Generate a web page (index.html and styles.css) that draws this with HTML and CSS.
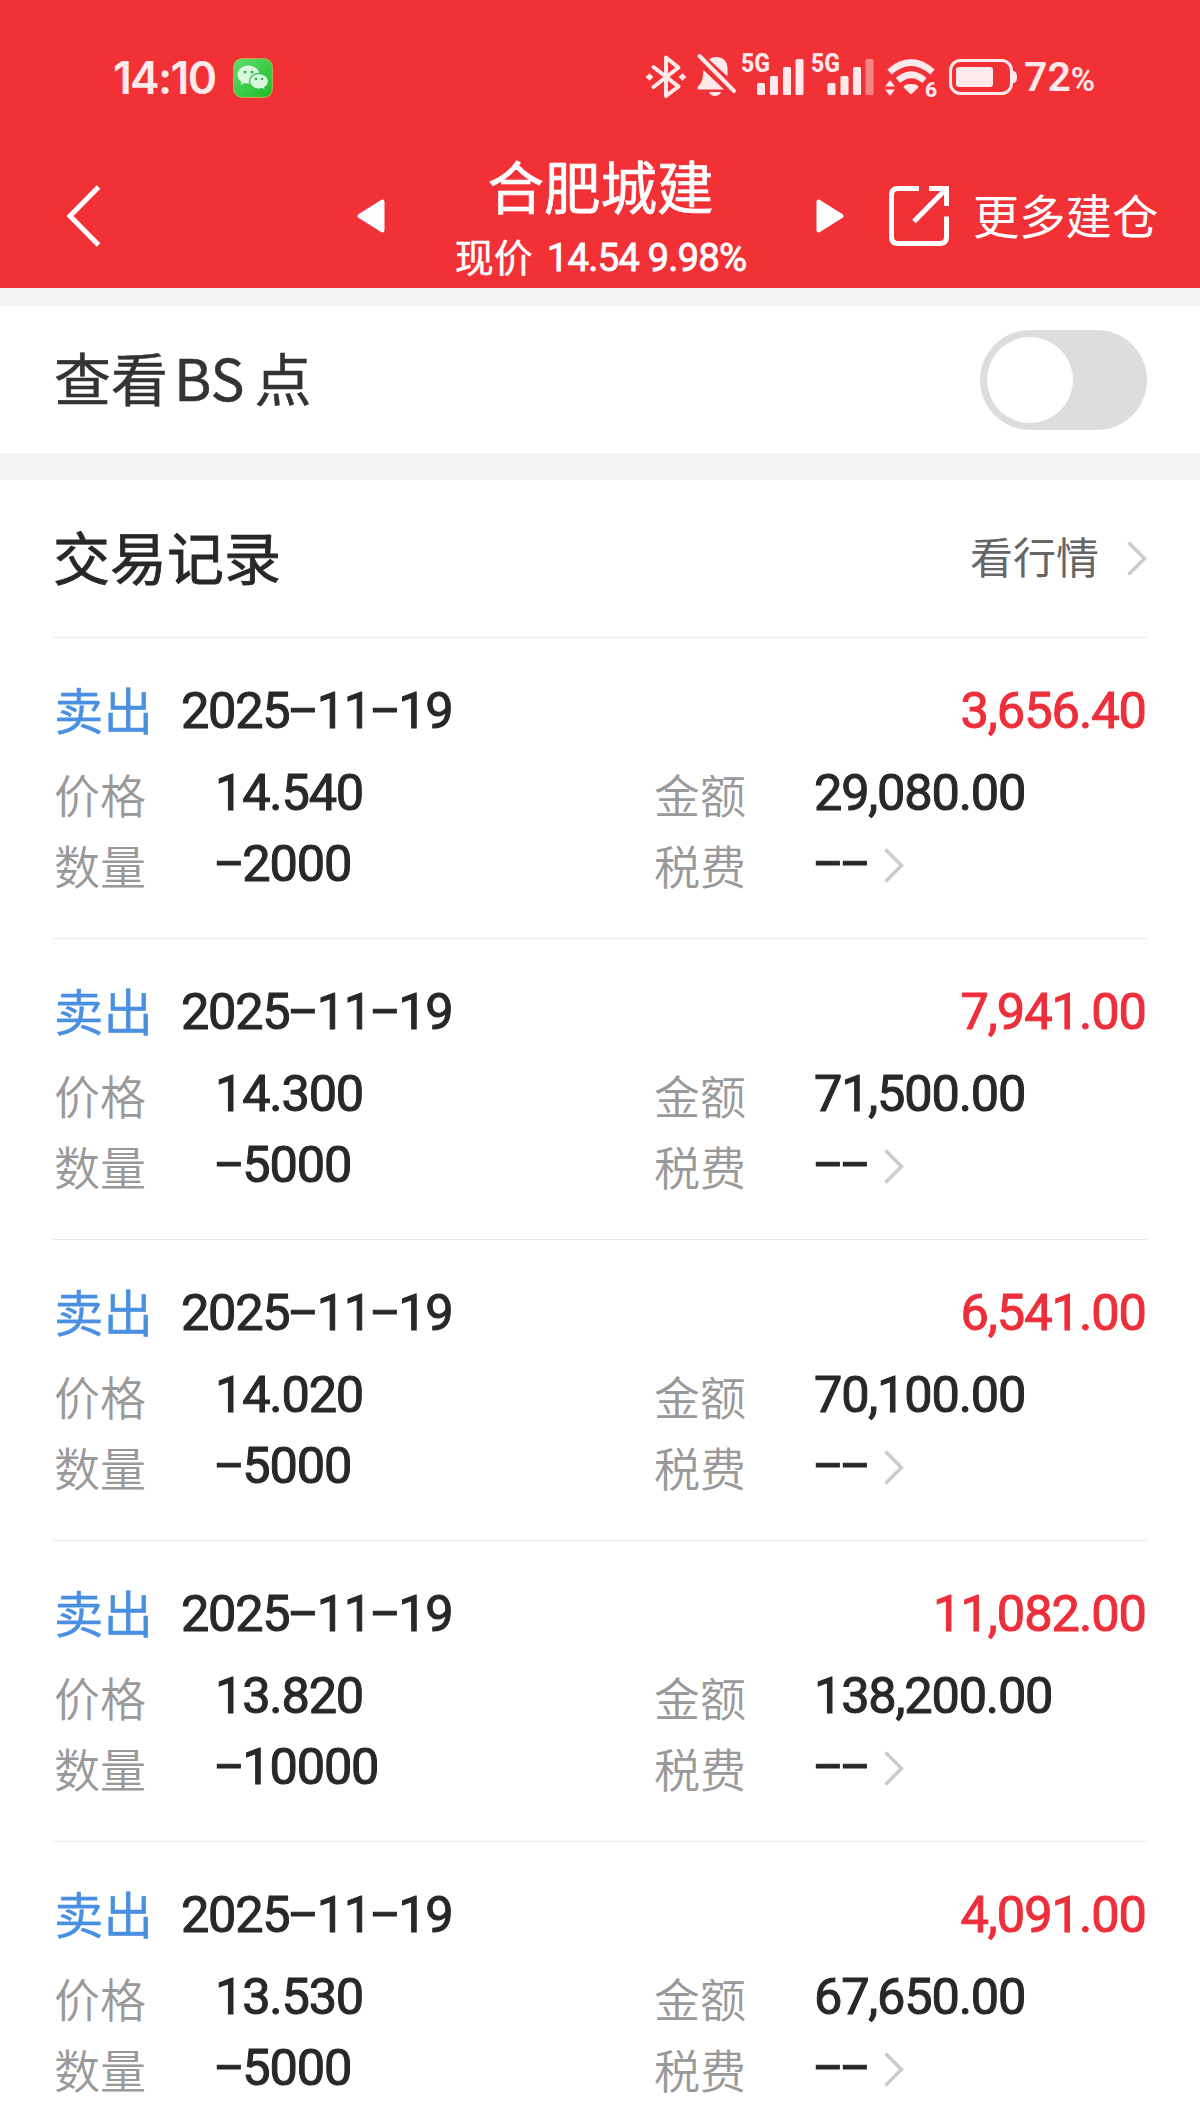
FILE: index.html
```html
<!DOCTYPE html>
<html lang="zh-CN">
<head>
<meta charset="utf-8">
<title>合肥城建 交易记录</title>
<link rel="stylesheet" href="styles.css">
</head>
<body>
<svg width="0" height="0" class="defs">
  <symbol id="chev" viewBox="0 0 20 35"><path d="M1.5 1.5 17.5 17.5 1.5 33.5" fill="none" stroke="#ccc" stroke-width="3.6"/></symbol>
</svg>
<header class="top">
  <div class="status">
    <span class="time">14:10</span>
    <svg class="wechat" width="40" height="40" viewBox="0 0 40 40">
      <defs><linearGradient id="wg" x1="0" y1="0" x2="1" y2="1"><stop offset="0" stop-color="#5fdc72"/><stop offset="1" stop-color="#1dbd22"/></linearGradient></defs>
      <rect x=".7" y=".7" width="38.6" height="38.6" rx="8" fill="url(#wg)" stroke="#b5b94c" stroke-width="1"/>
      <path d="M15.500 7.500c-6.200 0-11 4-11 9.200 0 2.900 1.500 5.300 3.900 7l-.7 3.300 3.800-2c1.300.4 2.600.6 4 .6 6.200 0 11-4 11-8.900 0-5.200-4.800-9.200-11-9.200z" fill="#d9f7dc"/>
      <path d="M26 15.500c-5.400 0-9.500 3.500-9.500 7.800s4.100 7.800 9.500 7.800c1.200 0 2.300-.2 3.300-.5l3 1.600-.6-2.700c2.200-1.500 3.700-3.700 3.700-6.200 0-4.300-4-7.800-9.400-7.800z" fill="#d9f7dc" stroke="#35c748" stroke-width="1.300"/>
      <g fill="#3fae4b"><circle cx="12" cy="14" r="1.500"/><circle cx="19" cy="14" r="1.500"/><circle cx="23" cy="21" r="1.300"/><circle cx="29" cy="21" r="1.300"/></g>
    </svg>
    <svg class="icons" width="380" height="70" viewBox="640 40 380 70">
      <g fill="none" stroke="#ffe9ea" stroke-width="4" stroke-linejoin="round" stroke-linecap="round">
        <path d="M653.500 67 678.500 86.500 666 96V57.500L678.500 67.500 653.500 87"/>
      </g>
      <g fill="#ffe9ea">
        <path d="M649.500 73.200l3.800 3.800-3.800 3.800-3.800-3.800zM682.500 73.200l3.800 3.800-3.800 3.800-3.800-3.800z"/>
        <path d="M709 59.500C717 54 728 58 727.500 69V76.500zM703.500 70 724 89.500H698C697 88 697.500 87 699 85.500 703 81 703 76 703.500 70zM709 92h12c-1.500 5.500-10.500 5.500-12 0z"/>
        <path d="M699.500 56 734 91" fill="none" stroke="#ffe9ea" stroke-width="4" stroke-linecap="round"/>
        <text class="net" x="741" y="72" textLength="29" lengthAdjust="spacingAndGlyphs">5G</text>
        <text class="net" x="811" y="72" textLength="29" lengthAdjust="spacingAndGlyphs">5G</text>
        <rect x="757" y="83" width="8" height="12" rx="1.500"/><rect x="770" y="76" width="8" height="19" rx="1.500"/><rect x="783" y="67" width="8" height="28" rx="1.500"/><rect x="795.500" y="59" width="8" height="36" rx="1.500"/>
        <rect x="827.500" y="83" width="8" height="12" rx="1.500"/><rect x="840.500" y="76" width="8" height="19" rx="1.500"/><rect x="853" y="67" width="8" height="28" rx="1.500"/><rect x="865.500" y="59" width="8" height="36" rx="1.500" opacity=".45"/>
        <path d="M911 94.500 903.500 87.500Q903.500 84 911 84T918.500 87.500z"/>
        <path d="M890 80l5 6.500h-10zM890 96l5-6.500h-10z"/>
        <text class="six" x="925" y="96.500">6</text>
        <rect x="956" y="67" width="37" height="20" rx="3"/>
        <path d="M1013 71q4 0 4 6t-4 6z"/>
      </g>
      <g fill="none" stroke="#ffe9ea">
        <path d="M889.500 72Q911 53 932.500 72" stroke-width="6.500"/>
        <path d="M898 80.500Q911 69 924.500 80.500" stroke-width="6.500"/>
        <rect x="950.500" y="60.500" width="61" height="33" rx="10" stroke-width="3"/>
      </g>
    </svg>
    <span class="battery">72<small>%</small></span>
  </div>
  <nav class="nav">
    <svg class="back" width="36" height="62" viewBox="0 0 36 62"><path d="M33.500 2 5 31 33.500 60" fill="none" stroke="#fff" stroke-width="5"/></svg>
    <svg class="prev" width="28" height="34" viewBox="0 0 28 34"><path d="M25.500 2.500V31.500L2.500 17z" fill="#fff" stroke="#fff" stroke-width="4" stroke-linejoin="round"/></svg>
    <div class="title">
      <h1>合肥城建</h1>
      <p>现价<span>14.54 9.98%</span></p>
    </div>
    <svg class="next" width="28" height="34" viewBox="0 0 28 34"><path d="M2.500 2.500V31.500L25.500 17z" fill="#fff" stroke="#fff" stroke-width="4" stroke-linejoin="round"/></svg>
    <svg class="share" width="62" height="62" viewBox="0 0 62 62" fill="none" stroke="#fff" stroke-width="5"><path d="M31 3.500H10Q3.500 3.500 3.500 10V52Q3.500 58.500 10 58.500H51.500Q58.500 58.500 58.500 52V31.500M41 3.500H58.500V21M58 4 26 36.500"/></svg>
    <span class="more">更多建仓</span>
  </nav>
</header>
<section class="bs">
  <h2>查看<span>BS</span>点</h2>
  <div class="switch"><i></i></div>
</section>
<main>
  <div class="head"><h2>交易记录</h2><a>看行情</a><svg width="20" height="35"><use href="#chev"/></svg></div>
  <article class="rec">
    <div class="line"><b>卖出</b><time>2025<i>-</i>11<i>-</i>19</time><strong>3,656.40</strong></div>
    <dl><dt>价格</dt><dd>14.540</dd><dt>金额</dt><dd>29,080.00</dd>
    <dt>数量</dt><dd><i>-</i>2000</dd><dt>税费</dt><dd><i>-</i><i>-</i><svg width="20" height="35"><use href="#chev"/></svg></dd></dl>
  </article>
  <article class="rec">
    <div class="line"><b>卖出</b><time>2025<i>-</i>11<i>-</i>19</time><strong>7,941.00</strong></div>
    <dl><dt>价格</dt><dd>14.300</dd><dt>金额</dt><dd>71,500.00</dd>
    <dt>数量</dt><dd><i>-</i>5000</dd><dt>税费</dt><dd><i>-</i><i>-</i><svg width="20" height="35"><use href="#chev"/></svg></dd></dl>
  </article>
  <article class="rec">
    <div class="line"><b>卖出</b><time>2025<i>-</i>11<i>-</i>19</time><strong>6,541.00</strong></div>
    <dl><dt>价格</dt><dd>14.020</dd><dt>金额</dt><dd>70,100.00</dd>
    <dt>数量</dt><dd><i>-</i>5000</dd><dt>税费</dt><dd><i>-</i><i>-</i><svg width="20" height="35"><use href="#chev"/></svg></dd></dl>
  </article>
  <article class="rec">
    <div class="line"><b>卖出</b><time>2025<i>-</i>11<i>-</i>19</time><strong>11,082.00</strong></div>
    <dl><dt>价格</dt><dd>13.820</dd><dt>金额</dt><dd>138,200.00</dd>
    <dt>数量</dt><dd><i>-</i>10000</dd><dt>税费</dt><dd><i>-</i><i>-</i><svg width="20" height="35"><use href="#chev"/></svg></dd></dl>
  </article>
  <article class="rec">
    <div class="line"><b>卖出</b><time>2025<i>-</i>11<i>-</i>19</time><strong>4,091.00</strong></div>
    <dl><dt>价格</dt><dd>13.530</dd><dt>金额</dt><dd>67,650.00</dd>
    <dt>数量</dt><dd><i>-</i>5000</dd><dt>税费</dt><dd><i>-</i><i>-</i><svg width="20" height="35"><use href="#chev"/></svg></dd></dl>
  </article>
</main>
</body>
</html>
```
FILE: styles.css
```css
* { box-sizing: border-box; margin: 0; padding: 0; }
html, body { height: 2122px; overflow: hidden; }
body { width: 1200px; background: #f4f4f4; color: #282828; font-family: "Noto Sans CJK SC", sans-serif; }
svg { display: block; flex: none; }
.defs { position: absolute; }
h1, h2 { font-weight: 400; white-space: nowrap; }

/* red header */
.top { height: 288px; background: #f23136; color: #fff; }
.status { display: flex; align-items: center; height: 140px; padding: 15px 0 0 113px; color: #ffe9ea; font-family: Inter, sans-serif; }
.time { width: 120px; font-size: 44.5px; font-weight: 600; letter-spacing: -1.7px; line-height: 50px; }
.icons { margin: -5px 0 0 367px; }
.net { font: 800 25px Roboto, sans-serif; }
.six { font: 800 21px Roboto, sans-serif; }
.battery { margin: 2px 0 0 4px; font: 600 41px/50px Roboto, sans-serif; white-space: nowrap; }
.battery small { font-size: 33px; font-weight: 600; }
.nav { display: flex; align-items: center; height: 148px; padding: 4px 0 0 65px; }
.prev { margin-left: 256px; }
.title { display: flex; flex-direction: column; align-items: center; width: 431px; }
.title h1 { font-size: 56.5px; line-height: 70px; margin-top: 7px; -webkit-text-stroke: .7px; }
.title p { display: flex; align-items: center; font-size: 39px; line-height: 66px; -webkit-text-stroke: .4px; }
.title span { margin-left: 14px; font-family: Roboto, sans-serif; font-size: 38.5px; letter-spacing: -.9px; padding-top: 6px; -webkit-text-stroke: .8px; }
.share { margin-left: 44px; }
.more { margin-left: 23px; font-size: 46.3px; line-height: 60px; margin-top: -5px; white-space: nowrap; }

/* BS switch row */
.bs { display: flex; align-items: center; justify-content: space-between; height: 147px; margin-top: 18px; padding: 0 53px 0 54px; background: #fff; color: #333; }
.bs h2 { font-size: 57px; line-height: 80px; margin-top: -7px; -webkit-text-stroke: .5px; }
.bs span { margin: 0 10px 0 6px; }
.switch { display: flex; align-items: center; width: 167px; height: 100px; padding-left: 7px; border-radius: 50px; background: #ddd; }
.switch i { width: 86px; height: 86px; border-radius: 50%; background: #fff; }

/* trade records */
main { margin-top: 27px; padding: 0 53px; height: 1642px; background: #fff; overflow: hidden; }
.head { display: flex; align-items: center; height: 158px; border-bottom: 1px solid #eaeaea; }
.head h2 { flex: 1; font-size: 57px; line-height: 80px; margin-top: -8px; -webkit-text-stroke: .8px; }
.head a { margin: -7px 28px 0 0; font-size: 43px; line-height: 60px; color: #666; }
.rec { height: 301px; padding-top: 43px; border-bottom: 1px solid #eaeaea; }
.line { display: flex; align-items: center; height: 60px; }
.line b { width: 128px; padding-left: 1px; font-size: 49.5px; font-weight: 400; line-height: 60px; color: #4a90e2; margin-top: -5px; -webkit-text-stroke: .3px; }
time, strong, dd { font: 400 50.500px/60px Roboto, sans-serif; letter-spacing: -1.300px; white-space: nowrap; -webkit-text-stroke: 1px; }
strong { margin-left: auto; padding-right: 1px; letter-spacing: -1px; color: #ed2f3b; }
dd { letter-spacing: -1.200px; }
time i, dd i { display: inline-block; margin: 0 6.700px; font-style: normal; letter-spacing: 0; transform: translateY(-3px) scaleX(1.850); }
dl { display: grid; grid-template-columns: 162px 438px 161px 1fr; grid-auto-rows: 71px; align-items: center; margin-top: 16px; }
dt { padding-left: 1px; font-size: 46px; font-weight: 350; line-height: 60px; color: #999; }
dd { display: flex; align-items: center; }
dd svg { margin: 4px 0 0 15px; }
```
